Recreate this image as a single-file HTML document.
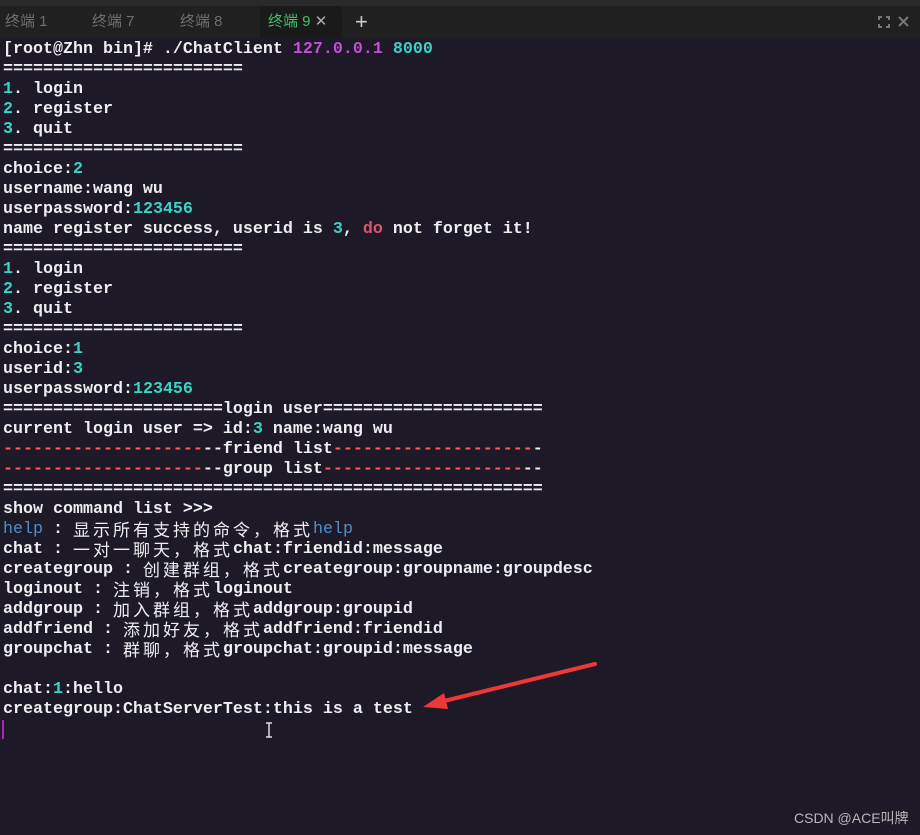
<!DOCTYPE html>
<html><head><meta charset="utf-8"><style>
html,body{margin:0;padding:0;width:920px;height:835px;overflow:hidden;background:#1e1927;}
.top{position:absolute;left:0;top:0;width:920px;height:6px;background:#2a2a2a;}
.bar{position:absolute;left:0;top:6px;width:920px;height:32px;background:#202020;}
.tab{position:absolute;top:6px;height:32px;line-height:32px;font-family:"Liberation Sans","Noto Sans CJK SC",sans-serif;font-size:15px;color:#6e6e6e;}
.act{background:#1a1a1a;border-radius:5px 5px 0 0;color:#3fbf6a;}
.term{position:absolute;left:3px;top:40px;font-family:"Liberation Mono","Noto Sans CJK SC",monospace;font-size:16.67px;line-height:20px;color:#eceef0;white-space:pre;font-weight:bold;}
.term div{height:20px;}
.c{color:#3ad3c4}.p{color:#c24fd6}.r{color:#ff5a5a}.b{color:#4d8fc9;font-weight:normal}.d{color:#e2506f}
.z{font-size:17px;font-weight:normal;font-family:"Noto Sans CJK SC",sans-serif;letter-spacing:3px;display:inline-block;height:20px;line-height:20px;vertical-align:top;position:relative;top:-1px;}
.wm{position:absolute;left:794px;top:808px;font-family:"Liberation Sans","Noto Sans CJK SC",sans-serif;font-size:14px;color:#b8b8b8;}
</style></head><body>
<div class="top"></div><div class="bar"></div>
<div class="tab" style="left:5px">终端 1</div>
<div class="tab" style="left:92px">终端 7</div>
<div class="tab" style="left:180px">终端 8</div>
<div class="tab act" style="left:260px;width:82px;padding-left:8px;box-sizing:border-box">终端 9 <span style="color:#aaa">✕</span></div>
<div class="tab" style="left:355px;color:#ccc;font-size:22px">+</div>
<svg style="position:absolute;left:876px;top:14px" width="40" height="16"><g stroke="#777" stroke-width="2" fill="none"><path d="M3 6V3h3M10 3h3v3M13 10v3h-3M6 13H3v-3"/><path d="M23 3l9 9M32 3l-9 9"/></g></svg>
<div class="term"><div>[root@Zhn bin]# ./ChatClient <span class="p">127.0.0.1</span> <span class="c">8000</span></div><div>========================</div><div><span class="c">1</span>. login</div><div><span class="c">2</span>. register</div><div><span class="c">3</span>. quit</div><div>========================</div><div>choice:<span class="c">2</span></div><div>username:wang wu</div><div>userpassword:<span class="c">123456</span></div><div>name register success, userid is <span class="c">3</span>, <span class="d">do</span> not forget it!</div><div>========================</div><div><span class="c">1</span>. login</div><div><span class="c">2</span>. register</div><div><span class="c">3</span>. quit</div><div>========================</div><div>choice:<span class="c">1</span></div><div>userid:<span class="c">3</span></div><div>userpassword:<span class="c">123456</span></div><div>======================login user======================</div><div>current login user =&gt; id:<span class="c">3</span> name:wang wu</div><div><span class="r">--------------------</span>--friend list<span class="r">--------------------</span>-</div><div><span class="r">--------------------</span>--group list<span class="r">--------------------</span>--</div><div>======================================================</div><div>show command list &gt;&gt;&gt;</div><div><span class="b">help</span> : <span class="z">显示所有支持的命令，格式</span><span class="b">help</span></div><div>chat : <span class="z">一对一聊天，格式</span>chat:friendid:message</div><div>creategroup : <span class="z">创建群组，格式</span>creategroup:groupname:groupdesc</div><div>loginout : <span class="z">注销，格式</span>loginout</div><div>addgroup : <span class="z">加入群组，格式</span>addgroup:groupid</div><div>addfriend : <span class="z">添加好友，格式</span>addfriend:friendid</div><div>groupchat : <span class="z">群聊，格式</span>groupchat:groupid:message</div><div></div><div>chat:<span class="c">1</span>:hello</div><div>creategroup:ChatServerTest:this is a test</div></div>
<div style="position:absolute;left:2px;top:720px;width:2px;height:19px;background:#b020c0"></div>
<svg style="position:absolute;left:0;top:0" width="920" height="835">
<path d="M595 664L440 702" stroke="#ee3838" stroke-width="4" stroke-linecap="round"/>
<path d="M423 707L444 693L448 709Z" fill="#ee3838"/>
<path d="M266 723h6M269 723v14M266 737h6" stroke="#ddd" stroke-width="1.5" fill="none"/>
</svg>
<div class="wm">CSDN @ACE叫牌</div>
</body></html>
